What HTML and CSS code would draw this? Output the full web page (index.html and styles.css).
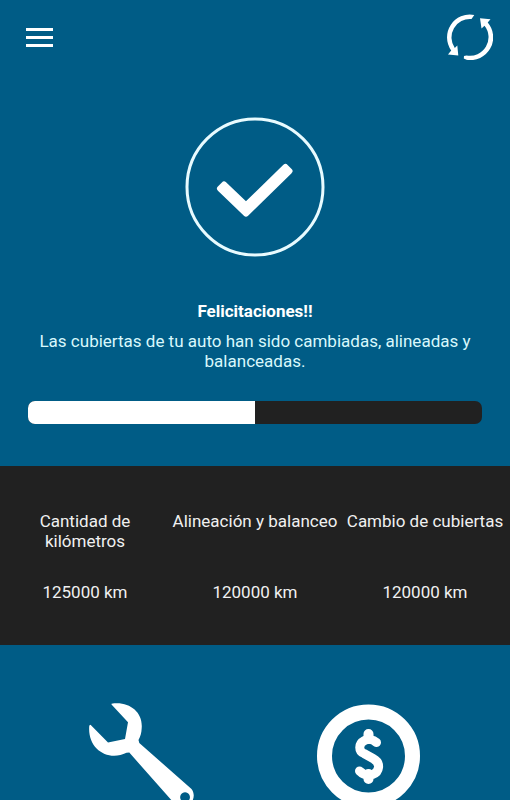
FILE: index.html
```html
<!DOCTYPE html>
<html lang="es">
<head>
<meta charset="utf-8">
<meta name="viewport" content="width=device-width, initial-scale=1">
<title>Cubiertas</title>
<link rel="stylesheet" href="styles.css">
</head>
<body>
<header class="topbar">
  <button class="icon-button" type="button" aria-label="Menú">
    <svg width="27" height="19" viewBox="0 0 27 19"><path d="M0 0h27v3H0zM0 8h27v3H0zM0 16h27v3H0z"/></svg>
  </button>
  <button class="icon-button" type="button" aria-label="Actualizar">
    <svg width="46" height="46" viewBox="0 0 46 46">
      <path d="M27.300 1A22.800 22.800 0 0 0 4.200 36.500L1 40.500 11.300 41.500 10.300 31.500 7.800 34A18.500 18.500 0 0 1 24.500 5Z"/>
      <path d="M33 4.200 43.500 5.200 40.700 8.500A22.800 22.800 0 0 1 19.500 45.800L16.800 44.500 17 42 19.500 41.400A18.500 18.500 0 0 0 37.500 11.700L34.500 14.500Z"/>
    </svg>
  </button>
</header>
<main>
  <section class="status">
    <svg class="check" width="140" height="140" viewBox="0 0 140 140" role="img" aria-label="Completado">
      <circle class="check-ring" cx="70" cy="70" r="68"/>
      <path class="check-mark" d="M39 67.500 61 88.500 100.500 50 104.500 54 61 96.500 35 71.500Z"/>
    </svg>
    <h1>Felicitaciones!!</h1>
    <p>Las cubiertas de tu auto han sido cambiadas, alineadas y balanceadas.</p>
    <div class="progress" role="progressbar" aria-label="Progreso" aria-valuemin="0" aria-valuemax="100" aria-valuenow="50"><div class="progress-fill" style="width:50%"></div></div>
  </section>
  <table class="stats">
    <thead><tr><th scope="col">Cantidad de kilómetros</th><th scope="col">Alineación y balanceo</th><th scope="col">Cambio de cubiertas</th></tr></thead>
    <tbody><tr><td>125000 km</td><td>120000 km</td><td>120000 km</td></tr></tbody>
  </table>
  <nav class="actions">
    <button class="icon-button" type="button" aria-label="Servicio">
      <svg width="106" height="106" viewBox="0 0 106 106">
        <path fill-rule="evenodd" d="M22.500 .8C40-2 54 9 52.700 25c-.2 5-1.200 8-3.200 12l.8 3L102.500 86c6 8-1 19-10 18-3-.4-5-1.500-8-4.500L40.300 49.600 37.500 49.800C19 59-2 46 .3 22.500L1.500 21.800 19 39.600 36 36 39 19.300 22.500 1.500ZM96 89.300a4.900 4.900 0 1 0 .1 0Z"/>
      </svg>
    </button>
    <button class="icon-button" type="button" aria-label="Costos">
      <svg width="106" height="106" viewBox="0 0 106 106">
        <circle class="coin-ring" cx="52.500" cy="53" r="44"/>
        <path class="coin-sign" d="M60.500 39.500C57 36.500 52 35.500 48.500 37.500 42 41 42.500 48 48 50.500L57 55.500C65.500 60 63.500 69 56.500 71.500 51 73 47 71.500 43.500 68"/>
        <path class="coin-bar" d="M52.500 31v5M52.500 71v5"/>
      </svg>
    </button>
  </nav>
</main>
</body>
</html>
```

FILE: styles.css
```css
* { box-sizing: border-box; }
body {
  margin: 0;
  height: 100vh;
  overflow: hidden;
  background: #005c86;
  color: #fff;
  font: 17px/20px Roboto, sans-serif;
}
svg { display: block; fill: #fff; }
.icon-button { padding: 0; border: 0; background: none; cursor: pointer; }
.topbar {
  display: flex;
  align-items: center;
  justify-content: space-between;
  padding: 14px 17px 0 26px;
}
.status {
  display: flex;
  flex-direction: column;
  align-items: center;
  padding: 57px 28px 42px;
  text-align: center;
}
.check-ring { fill: none; stroke: #e8fbff; stroke-width: 3; }
.check-mark { stroke: #fff; stroke-width: 6; stroke-linejoin: round; }
h1 { margin: 44px 0 10px; font-size: 17px; line-height: 20px; font-weight: 700; }
p { margin: 0 0 30px; color: #d9f8fc; }
.progress {
  width: 100%;
  height: 23px;
  overflow: hidden;
  border-radius: 7px;
  background: #212121;
}
.progress-fill { height: 100%; background: #fff; }
.stats {
  width: 100%;
  table-layout: fixed;
  border-collapse: collapse;
  background: #212121;
  color: #f0f0f0;
  text-align: center;
}
th { padding: 45px 0 31px; font-weight: 400; vertical-align: top; }
td { padding: 0 0 43px; }
.actions {
  display: grid;
  grid-template-columns: 1fr 1fr;
  justify-items: center;
  align-items: start;
  padding: 58px 28px;
}
.coin-ring { fill: none; stroke: #fff; stroke-width: 15; }
.coin-sign { fill: none; stroke: #fff; stroke-width: 9; stroke-linecap: round; stroke-linejoin: round; }
.coin-bar { fill: none; stroke: #fff; stroke-width: 10; stroke-linecap: round; }
```
